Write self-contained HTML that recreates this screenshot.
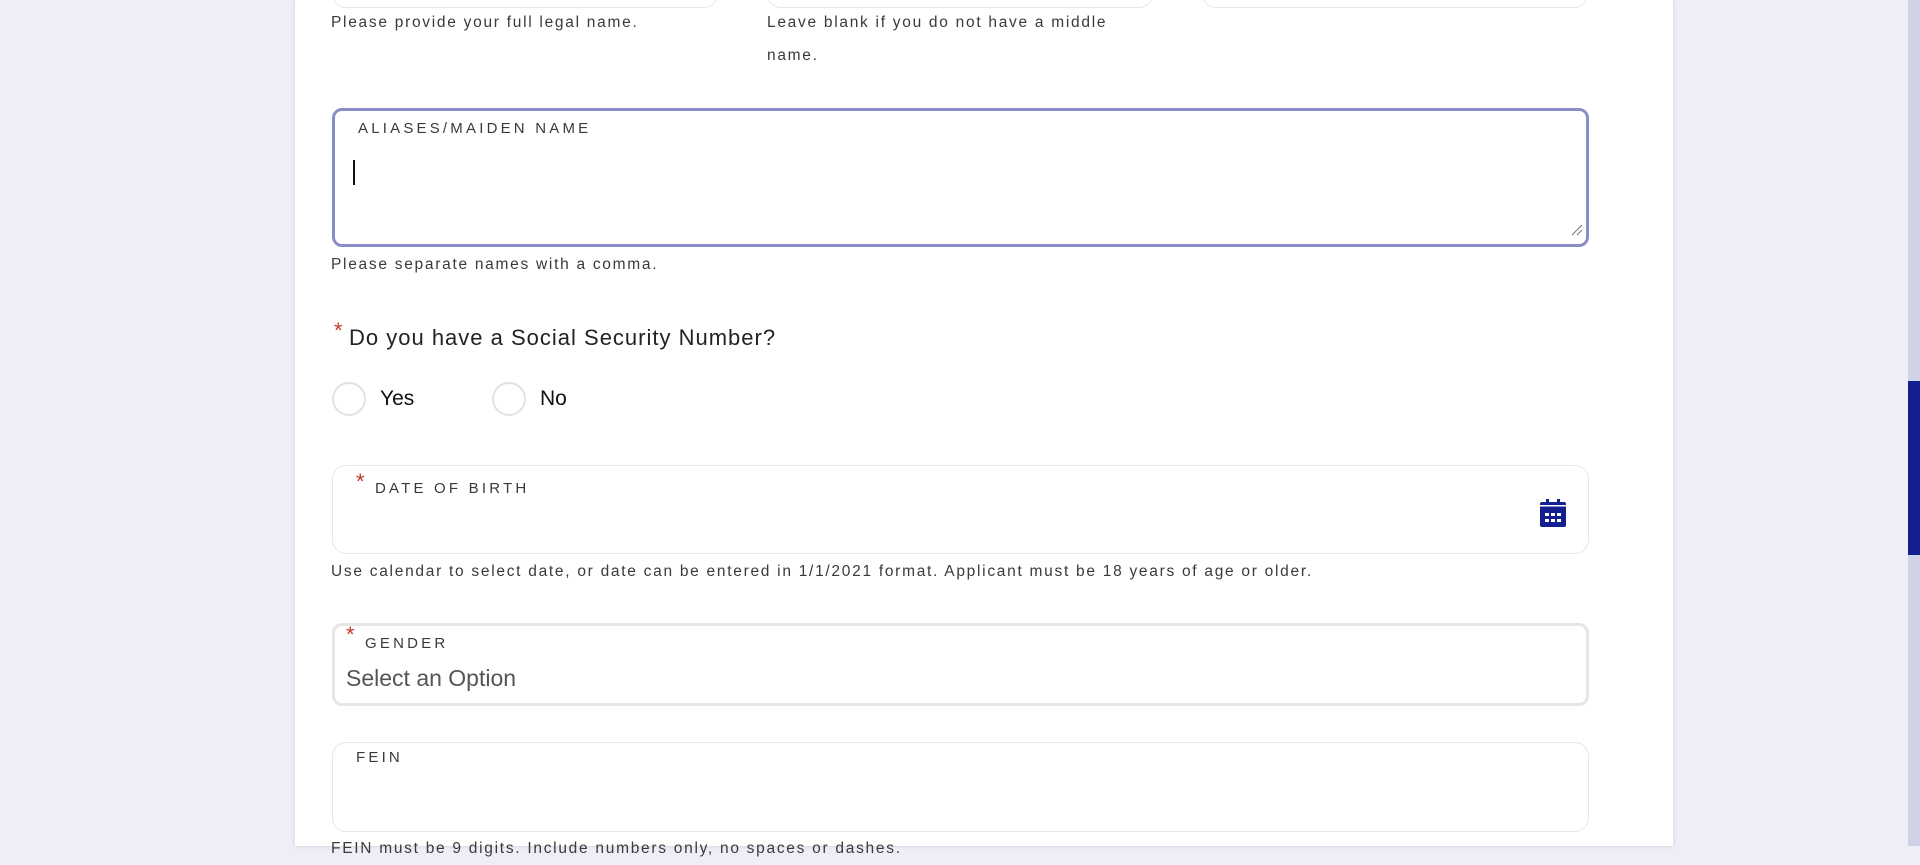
<!DOCTYPE html>
<html><head><style>
*{box-sizing:border-box;margin:0;padding:0}
body{width:1920px;height:846px;overflow:hidden;background:#eeeef8;font-family:"Liberation Sans",sans-serif;position:relative}
.card{position:absolute;left:295px;top:0;width:1378px;height:846px;background:#fff;box-shadow:0 0 4px rgba(0,0,0,.15)}
.abs{position:absolute}
.hint{position:absolute;font-size:15.5px;color:#3a3a3a;letter-spacing:1.72px;line-height:33px}
.box{position:absolute;border:1px solid #e6e6e6;border-radius:14px;background:#fff}
.lbl{position:absolute;font-size:15px;letter-spacing:3.2px;color:#3a3a3a}
.ast{position:absolute;color:#c0392b;font-size:22px}
.radio{position:absolute;width:34px;height:34px;border:2px solid #e2e2e2;border-radius:50%}
.sb{position:absolute;left:1908px;top:0;width:12px;height:846px;background:#d0d2e8}
.thumb{position:absolute;left:1908px;top:381px;width:12px;height:174px;background:#131f8f}
</style></head><body>
<div class="card"></div>
<div class="box" style="left:332px;top:-20px;width:386px;height:28px"></div>
<div class="box" style="left:767px;top:-20px;width:386px;height:28px"></div>
<div class="box" style="left:1202px;top:-20px;width:386px;height:28px"></div>
<div class="hint" style="left:331px;top:6px">Please provide your full legal name.</div>
<div class="hint" style="left:767px;top:6px;width:380px">Leave blank if you do not have a middle name.</div>

<div class="box" style="left:332px;top:108px;width:1257px;height:139px;border:3px solid #8a8ec8;border-radius:10px"></div>
<div class="lbl" style="left:358px;top:120px">ALIASES/MAIDEN NAME</div>
<div class="abs" style="left:353px;top:160px;width:2px;height:25px;background:#111"></div>
<svg class="abs" style="left:1571px;top:224px" width="12" height="12"><path d="M1 11L11 1M6 11L11 6" stroke="#777" stroke-width="1"/></svg>
<div class="hint" style="left:331px;top:248px">Please separate names with a comma.</div>

<div class="ast" style="left:334px;top:318px">*</div>
<div class="abs" style="left:349px;top:325px;font-size:22px;color:#222;letter-spacing:1px">Do you have a Social Security Number?</div>
<div class="radio" style="left:332px;top:382px"></div>
<div class="abs" style="left:380px;top:387px;font-size:21px;color:#111">Yes</div>
<div class="radio" style="left:492px;top:382px"></div>
<div class="abs" style="left:540px;top:387px;font-size:21px;color:#111">No</div>

<div class="box" style="left:332px;top:465px;width:1257px;height:89px"></div>
<div class="ast" style="left:356px;top:469px">*</div>
<div class="lbl" style="left:375px;top:480px">DATE OF BIRTH</div>
<svg class="abs" style="left:1540px;top:499px" width="27" height="28" viewBox="0 0 27 28"><rect x="0" y="3" width="26" height="25" rx="2" fill="#131f8f"/><rect x="6" y="0" width="3" height="5" fill="#131f8f"/><rect x="17" y="0" width="3" height="5" fill="#131f8f"/><rect x="0" y="6" width="26" height="1.5" fill="#fff"/><g fill="#fff"><rect x="5" y="14" width="4" height="3"/><rect x="11" y="14" width="4" height="3"/><rect x="17" y="14" width="4" height="3"/><rect x="5" y="20" width="4" height="3"/><rect x="11" y="20" width="4" height="3"/><rect x="17" y="20" width="4" height="3"/></g></svg>
<div class="hint" style="left:331px;top:555px">Use calendar to select date, or date can be entered in 1/1/2021 format. Applicant must be 18 years of age or older.</div>

<div class="box" style="left:332px;top:623px;width:1257px;height:83px;border:3px solid #e6e6e6;border-radius:10px"></div>
<div class="ast" style="left:346px;top:622px">*</div>
<div class="lbl" style="left:365px;top:635px">GENDER</div>
<div class="abs" style="left:346px;top:665px;font-size:23px;color:#555">Select an Option</div>

<div class="box" style="left:332px;top:742px;width:1257px;height:90px"></div>
<div class="lbl" style="left:356px;top:749px">FEIN</div>
<div class="hint" style="left:331px;top:832px">FEIN must be 9 digits. Include numbers only, no spaces or dashes.</div>

<div class="sb"></div><div class="thumb"></div>
</body></html>
